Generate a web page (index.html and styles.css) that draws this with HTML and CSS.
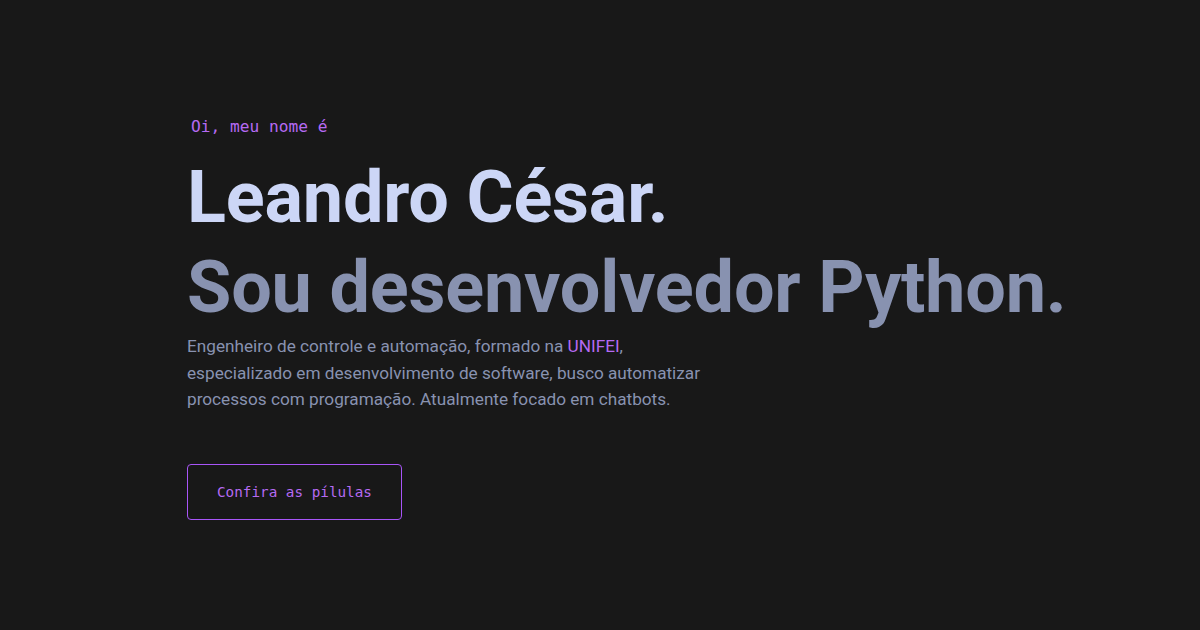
FILE: index.html
```html
<!DOCTYPE html>
<html lang="pt-BR">
<head>
<meta charset="utf-8">
<title>Leandro César</title>
<link rel="stylesheet" href="styles.css">
</head>
<body>
<main class="hero">
  <p class="intro">Oi, meu nome é</p>
  <h1 class="name">Leandro César.</h1>
  <h2 class="role">Sou desenvolvedor Python.</h2>
  <p class="desc">Engenheiro de controle e automação, formado na <a class="link" href="#">UNIFEI</a>, especializado em desenvolvimento de software, busco automatizar processos com programação. Atualmente focado em chatbots.</p>
  <div class="actions"><a class="btn" href="#">Confira as pílulas</a></div>
</main>
</body>
</html>
```
FILE: styles.css
```css
html, body {
  margin: 0;
  padding: 0;
  background: #181818;
}
body {
  font-family: Roboto, "Liberation Sans", sans-serif;
  color: #8892b0;
}
.hero {
  display: flex;
  flex-direction: column;
  align-items: flex-start;
  padding: 117px 40px 0 187px;
  box-sizing: border-box;
  height: 630px;
}
.intro {
  margin: 0 0 25px 4px;
  font-family: "DejaVu Sans Mono", "Liberation Mono", monospace;
  font-size: 16.2px;
  line-height: 20px;
  color: #b56af2;
}
.name, .role {
  margin: 0;
  font-family: Roboto, "Liberation Sans", sans-serif;
  font-weight: 700;
  font-size: 72px;
  line-height: 72px;
  letter-spacing: -0.2px;
  white-space: nowrap;
}
.name {
  color: #ccd6f6;
  margin-bottom: 18px;
}
.role {
  color: #8892b0;
}
.desc {
  margin: 9px 0 0;
  max-width: 540px;
  font-size: 17.2px;
  line-height: 26.5px;
  color: #8892b0;
}
.link {
  color: #b56af2;
  text-decoration: none;
}
.actions {
  margin-top: 51px;
}
.btn {
  display: inline-flex;
  align-items: center;
  box-sizing: border-box;
  height: 56px;
  padding: 0 29px;
  border: 1px solid #a855f7;
  border-radius: 4px;
  font-family: "DejaVu Sans Mono", "Liberation Mono", monospace;
  font-size: 14.3px;
  color: #b56af2;
  text-decoration: none;
}
```
